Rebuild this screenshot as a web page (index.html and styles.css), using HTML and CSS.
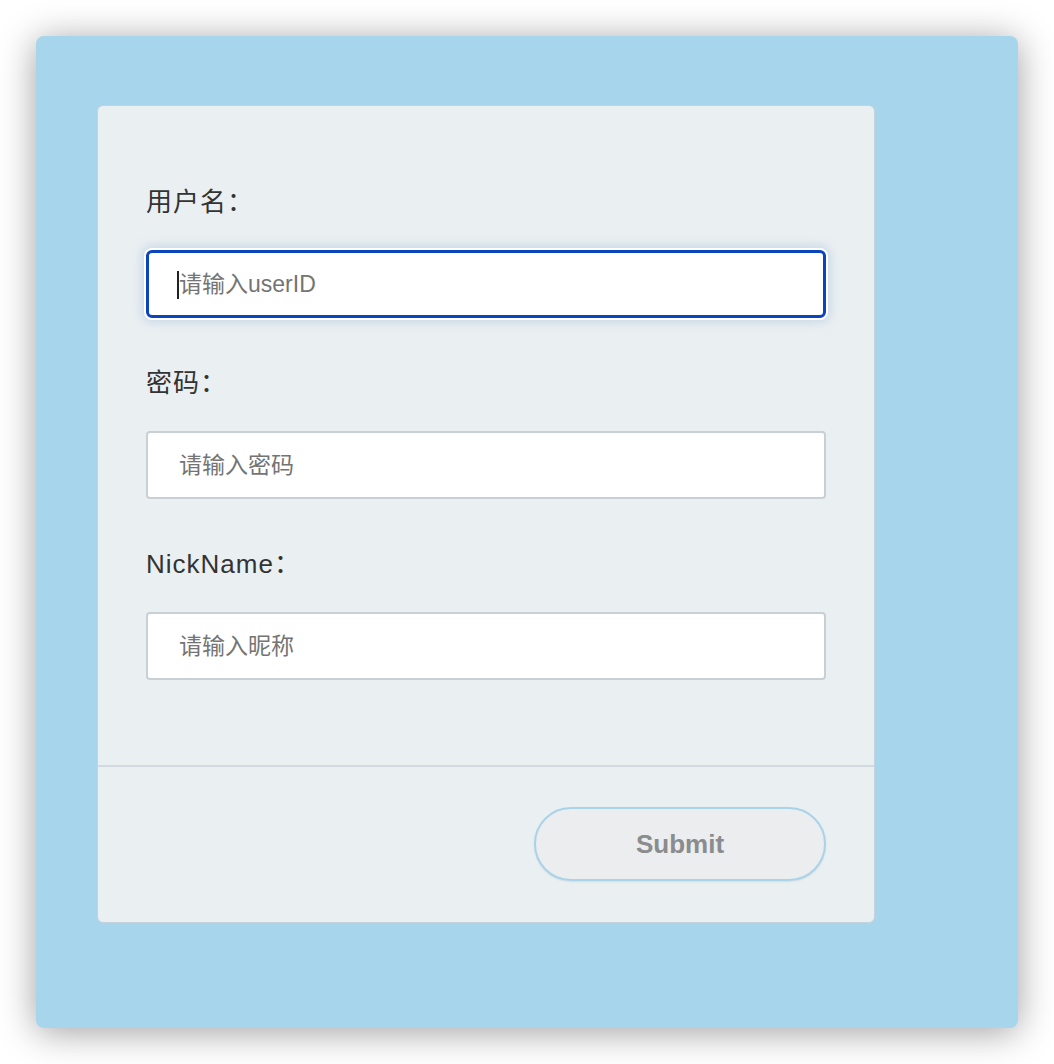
FILE: index.html
```html
<!DOCTYPE html>
<html lang="zh-CN">
<head>
<meta charset="utf-8">
<title>Form</title>
<link rel="stylesheet" href="styles.css">
</head>
<body>
<div class="panel">
  <form class="card">
    <div class="card-body">
      <div class="field">
        <label class="label">用户名：</label>
        <div class="input-wrap is-focused">
          <input class="input" type="text" placeholder="请输入userID">
        </div>
      </div>
      <div class="field">
        <label class="label">密码：</label>
        <div class="input-wrap">
          <input class="input" type="password" placeholder="请输入密码">
        </div>
      </div>
      <div class="field">
        <label class="label">NickName：</label>
        <div class="input-wrap">
          <input class="input" type="text" placeholder="请输入昵称">
        </div>
      </div>
    </div>
    <div class="card-footer">
      <button class="submit" type="button">Submit</button>
    </div>
  </form>
</div>
</body>
</html>
```

FILE: styles.css
```css
html, body {
  margin: 0;
  padding: 0;
  background: #ffffff;
}

body {
  font-family: "Liberation Sans", "Noto Sans CJK SC", sans-serif;
  width: 1054px;
  height: 1064px;
  overflow: hidden;
}

.panel {
  box-sizing: border-box;
  margin: 36px 0 0 36px;
  width: 982px;
  height: 992px;
  background: #a6d5ec;
  border-radius: 8px;
  box-shadow: 0 4px 36px rgba(0, 0, 0, 0.38);
  padding: 69px 0 0 61px;
}

.card {
  box-sizing: border-box;
  width: 778px;
  height: 818px;
  background: #eaeff2;
  border: 1px solid #c3d2dc;
  border-radius: 6px;
  display: flex;
  flex-direction: column;
}

.card-body {
  padding: 81px 48px 85px 48px;
  display: flex;
  flex-direction: column;
  gap: 50px;
}

.field {
  display: flex;
  flex-direction: column;
}

.label {
  font-size: 26px;
  line-height: 30px;
  letter-spacing: 1px;
  color: #333333;
  margin-bottom: 33px;
}

.input-wrap {
  position: relative;
  height: 68px;
}

.input {
  box-sizing: border-box;
  width: 680px;
  height: 68px;
  margin: 0;
  padding: 0 0 0 31px;
  border: 2px solid #c9d0d5;
  border-radius: 4px;
  background: #ffffff;
  font-family: "Liberation Sans", "Noto Sans CJK SC", sans-serif;
  font-size: 23px;
  color: #333333;
  outline: none;
}

.input::placeholder {
  color: #747474;
}

.is-focused .input {
  border: 3px solid #0b45bd;
  border-radius: 6px;
  padding-left: 30px;
  box-shadow: 0 0 0 2px #ffffff, 0 0 10px 4px rgba(170, 195, 220, 0.55);
}

.is-focused::before {
  content: "";
  position: absolute;
  left: 31px;
  top: 21px;
  width: 2px;
  height: 28px;
  background: #222222;
  z-index: 1;
}

.card-footer {
  border-top: 2px solid #d2d9e0;
  padding: 40px 48px 0 48px;
  display: flex;
  justify-content: flex-end;
}

.submit {
  box-sizing: border-box;
  width: 292px;
  height: 74px;
  border-radius: 37px;
  border: 2px solid #a9d3e9;
  background: #ebedef;
  color: #8a8c8e;
  font-family: "Liberation Sans", Arial, sans-serif;
  font-weight: bold;
  font-size: 26px;
  box-shadow: 0 1px 2px rgba(0, 0, 0, 0.08);
  cursor: pointer;
}
```
